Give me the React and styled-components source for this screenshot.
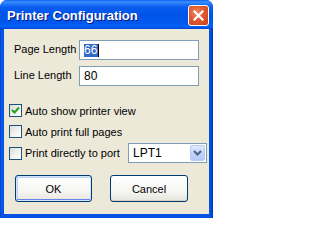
import React from "react";
import styled, { createGlobalStyle } from "styled-components";

const Global = createGlobalStyle`
  html, body { margin: 0; padding: 0; background: #ffffff; }
  body { font-family: "Liberation Sans", Arial, sans-serif; }
`;

const Window = styled.div`
  width: 213px;
  height: 218px;
  display: flex;
  flex-direction: column;
  border-radius: 7px 7px 0 0;
  overflow: hidden;
  background: #0554e3;
`;

const TitleBar = styled.div`
  height: 29px;
  flex: none;
  display: flex;
  align-items: center;
  padding: 0 7px 0 7px;
  box-sizing: border-box;
  background: linear-gradient(
    180deg,
    #0a5ff5 0%,
    #3d8ffb 7%,
    #2277f6 13%,
    #0a5cf0 25%,
    #0055e8 50%,
    #0058ee 80%,
    #0064fa 90%,
    #0052e2 96%,
    #0044d8 100%
  );
`;

const Title = styled.span`
  flex: 1;
  color: #ffffff;
  font: bold 13px "Liberation Sans", Arial, sans-serif;
  text-shadow: 1px 1px 0 #0a1883;
  margin-top: 1px;
  white-space: nowrap;
`;

const CloseButton = styled.div`
  width: 21px;
  height: 21px;
  box-sizing: border-box;
  border: 1px solid #ffffff;
  border-radius: 3px;
  margin-top: 1px;
  margin-right: -3px;
  background: radial-gradient(circle at 40% 35%, #f08a64 0%, #e0582e 45%, #c4401a 100%);
  display: flex;
  align-items: center;
  justify-content: center;
`;

const Frame = styled.div`
  flex: 1;
  display: flex;
  padding: 0 4px 4px 4px;
  background: linear-gradient(90deg, #0031c8 0px, #0a5ae8 1px, #0554e3 3px, #0554e3 calc(100% - 3px), #0046d0 calc(100% - 1px), #0028b0 100%);
`;

const Client = styled.div`
  flex: 1;
  background: #ece9d8;
  display: flex;
  flex-direction: column;
  font: 11px "Liberation Sans", Arial, sans-serif;
  color: #000000;
`;

const Fields = styled.div`
  display: flex;
  flex-direction: column;
  gap: 6px;
  padding: 11px 0 0 10px;
`;

const FieldRow = styled.div`
  display: flex;
  align-items: center;
`;

const FieldLabel = styled.span`
  width: 65px;
  margin-top: -2px;
`;

const TextBox = styled.div`
  width: 120px;
  height: 20px;
  box-sizing: border-box;
  border: 1px solid #7f9db9;
  background: #ffffff;
  display: flex;
  align-items: center;
  padding-left: 4px;
  font-size: 12px;
`;

const Selected = styled.span`
  background: #316ac5;
  color: #ffffff;
  height: 13px;
  line-height: 13px;
  padding: 0 1px 0 0;
  display: inline-block;
`;

const Caret = styled.span`
  width: 1px;
  height: 13px;
  background: #000000;
  display: inline-block;
`;

const Checks = styled.div`
  display: flex;
  flex-direction: column;
  padding: 18px 2px 0 5px;
`;

const CheckRow = styled.div`
  display: flex;
  align-items: center;
  gap: 3px;
  height: ${(p) => p.$h || 13}px;
  margin-top: ${(p) => p.$mt || 0}px;
`;

const Box = styled.div`
  width: 13px;
  height: 13px;
  box-sizing: border-box;
  border: 1px solid #1c5180;
  background: linear-gradient(135deg, #dcdcd7 0%, #f4f4f0 60%, #ffffff 100%);
  display: flex;
  align-items: center;
  justify-content: center;
  flex: none;
`;

const CheckLabel = styled.span`
  font-size: 11px;
  white-space: nowrap;
`;

const Combo = styled.div`
  margin-left: auto;
  width: 79px;
  height: 20px;
  box-sizing: border-box;
  border: 1px solid #7f9db9;
  background: #ffffff;
  display: flex;
  align-items: center;
  padding: 1px;
  font-size: 12px;
`;

const ComboText = styled.span`
  flex: 1;
  padding-left: 3px;
`;

const DropButton = styled.div`
  width: 15px;
  height: 16px;
  box-sizing: border-box;
  border: 1px solid #b9cbf3;
  border-radius: 2px;
  background: linear-gradient(180deg, #e1eafe 0%, #c3d3fd 50%, #b4c8f6 100%);
  display: flex;
  align-items: center;
  justify-content: center;
`;

const Buttons = styled.div`
  display: flex;
  gap: 18px;
  padding: 12px 0 0 11px;
`;

const Button = styled.div`
  width: ${(p) => p.$w}px;
  height: 27px;
  box-sizing: border-box;
  border: 1px solid #003c74;
  border-radius: 3px;
  background: linear-gradient(180deg, #ffffff 0%, #f6f6f3 60%, #e6e5dd 100%);
  box-shadow: ${(p) =>
    p.$default
      ? "inset 0 0 0 1px #cee7ff, inset 0 -1px 0 1px #6982ee, inset 1px 1px 0 1px #bccefb"
      : "inset 0 -1px 0 0 #d6d0c5"};
  display: flex;
  align-items: center;
  justify-content: center;
  font: 11px "Liberation Sans", Arial, sans-serif;
  color: #000000;
`;

function CheckMark() {
  return (
    <svg width="9" height="9" viewBox="0 0 9 9">
      <path d="M1 4 L3.5 6.5 L8 1.5" stroke="#21a121" strokeWidth="2" fill="none" />
    </svg>
  );
}

export default function App() {
  return (
    <>
      <Global />
      <Window>
        <TitleBar>
          <Title>Printer Configuration</Title>
          <CloseButton>
            <svg width="11" height="11" viewBox="0 0 11 11">
              <path d="M1.5 1.5 L9.5 9.5 M9.5 1.5 L1.5 9.5" stroke="#ffffff" strokeWidth="2.2" strokeLinecap="square" />
            </svg>
          </CloseButton>
        </TitleBar>
        <Frame>
          <Client>
            <Fields>
              <FieldRow>
                <FieldLabel>Page Length</FieldLabel>
                <TextBox>
                  <Selected>66</Selected>
                  <Caret />
                </TextBox>
              </FieldRow>
              <FieldRow>
                <FieldLabel>Line Length</FieldLabel>
                <TextBox>80</TextBox>
              </FieldRow>
            </Fields>
            <Checks>
              <CheckRow>
                <Box>
                  <CheckMark />
                </Box>
                <CheckLabel>Auto show printer view</CheckLabel>
              </CheckRow>
              <CheckRow $mt={8}>
                <Box />
                <CheckLabel>Auto print full pages</CheckLabel>
              </CheckRow>
              <CheckRow $mt={5} $h={20}>
                <Box />
                <CheckLabel>Print directly to port</CheckLabel>
                <Combo>
                  <ComboText>LPT1</ComboText>
                  <DropButton>
                    <svg width="9" height="6" viewBox="0 0 9 6">
                      <path d="M1 1 L4.5 4.5 L8 1" stroke="#4d6185" strokeWidth="2" fill="none" />
                    </svg>
                  </DropButton>
                </Combo>
              </CheckRow>
            </Checks>
            <Buttons>
              <Button $w={77} $default>OK</Button>
              <Button $w={78}>Cancel</Button>
            </Buttons>
          </Client>
        </Frame>
      </Window>
    </>
  );
}
